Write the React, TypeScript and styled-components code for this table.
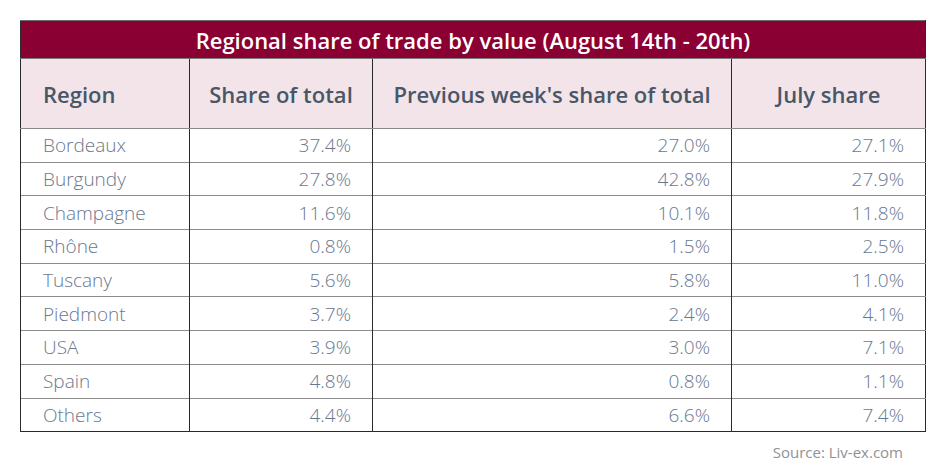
import React from 'react';
import styled, { createGlobalStyle } from 'styled-components';

const GlobalStyle = createGlobalStyle`
  html, body {
    margin: 0;
    padding: 0;
    background: #ffffff;
    font-family: 'Open Sans', 'Liberation Sans', sans-serif;
  }
`;

interface Row {
  region: string;
  share: string;
  previous: string;
  july: string;
}

const rows: Row[] = [
  { region: 'Bordeaux', share: '37.4%', previous: '27.0%', july: '27.1%' },
  { region: 'Burgundy', share: '27.8%', previous: '42.8%', july: '27.9%' },
  { region: 'Champagne', share: '11.6%', previous: '10.1%', july: '11.8%' },
  { region: 'Rhône', share: '0.8%', previous: '1.5%', july: '2.5%' },
  { region: 'Tuscany', share: '5.6%', previous: '5.8%', july: '11.0%' },
  { region: 'Piedmont', share: '3.7%', previous: '2.4%', july: '4.1%' },
  { region: 'USA', share: '3.9%', previous: '3.0%', july: '7.1%' },
  { region: 'Spain', share: '4.8%', previous: '0.8%', july: '1.1%' },
  { region: 'Others', share: '4.4%', previous: '6.6%', july: '7.4%' },
];

const Page = styled.div`
  width: 936px;
  height: 474px;
  box-sizing: border-box;
  padding: 20px 11px 0 20px;
  display: flex;
  flex-direction: column;
`;

const Table = styled.table`
  width: 906px;
  border-collapse: collapse;
  table-layout: fixed;
  border: 1px solid #2b2b2b;
  border-top-color: #6e6e6e;
`;

const TitleCell = styled.th`
  height: 37px;
  padding: 0;
  background: #8a0032;
  color: #ffffff;
  font-size: 22px;
  font-weight: 600;
  text-align: center;
  border-bottom: 1px solid #7a7a7a;
`;

const HeadCell = styled.th<{ $align: 'left' | 'center' }>`
  height: 69px;
  padding: 0 0 0 ${({ $align }) => ($align === 'left' ? '22px' : '0')};
  background: #f3e4e9;
  color: #485767;
  font-size: 22px;
  font-weight: 600;
  text-align: ${({ $align }) => $align};
  border-left: 1px solid #2b2b2b;
  border-bottom: 1.5px solid #8a8a8a;
`;

const DataRow = styled.tr`
  height: 33.7px;
  border-bottom: 1.5px solid #8c8c8c;

  &:last-child {
    border-bottom: 1px solid #2b2b2b;
  }
`;

const Cell = styled.td<{ $numeric?: boolean }>`
  padding: ${({ $numeric }) => ($numeric ? '0 21px 0 0' : '0 0 0 22px')};
  color: #687890;
  font-size: 19px;
  font-weight: 300;
  text-align: ${({ $numeric }) => ($numeric ? 'right' : 'left')};
  border-left: 1px solid #2b2b2b;
  white-space: nowrap;
`;

const Source = styled.div`
  align-self: flex-end;
  margin: 10px 22px 0 0;
  color: #8f9296;
  font-size: 15px;
  font-weight: 400;
`;

export default function App(): React.ReactElement {
  return (
    <>
      <GlobalStyle />
      <Page>
        <Table>
          <colgroup>
            <col style={{ width: 169 }} />
            <col style={{ width: 183 }} />
            <col style={{ width: 359 }} />
            <col />
          </colgroup>
          <thead>
            <tr>
              <TitleCell colSpan={4}>Regional share of trade by value (August 14th - 20th)</TitleCell>
            </tr>
            <tr>
              <HeadCell $align='left'>Region</HeadCell>
              <HeadCell $align='center'>Share of total</HeadCell>
              <HeadCell $align='center'>Previous week's share of total</HeadCell>
              <HeadCell $align='center'>July share</HeadCell>
            </tr>
          </thead>
          <tbody>
            {rows.map((row) => (
              <DataRow key={row.region}>
                <Cell>{row.region}</Cell>
                <Cell $numeric>{row.share}</Cell>
                <Cell $numeric>{row.previous}</Cell>
                <Cell $numeric>{row.july}</Cell>
              </DataRow>
            ))}
          </tbody>
        </Table>
        <Source>Source: Liv-ex.com</Source>
      </Page>
    </>
  );
}
